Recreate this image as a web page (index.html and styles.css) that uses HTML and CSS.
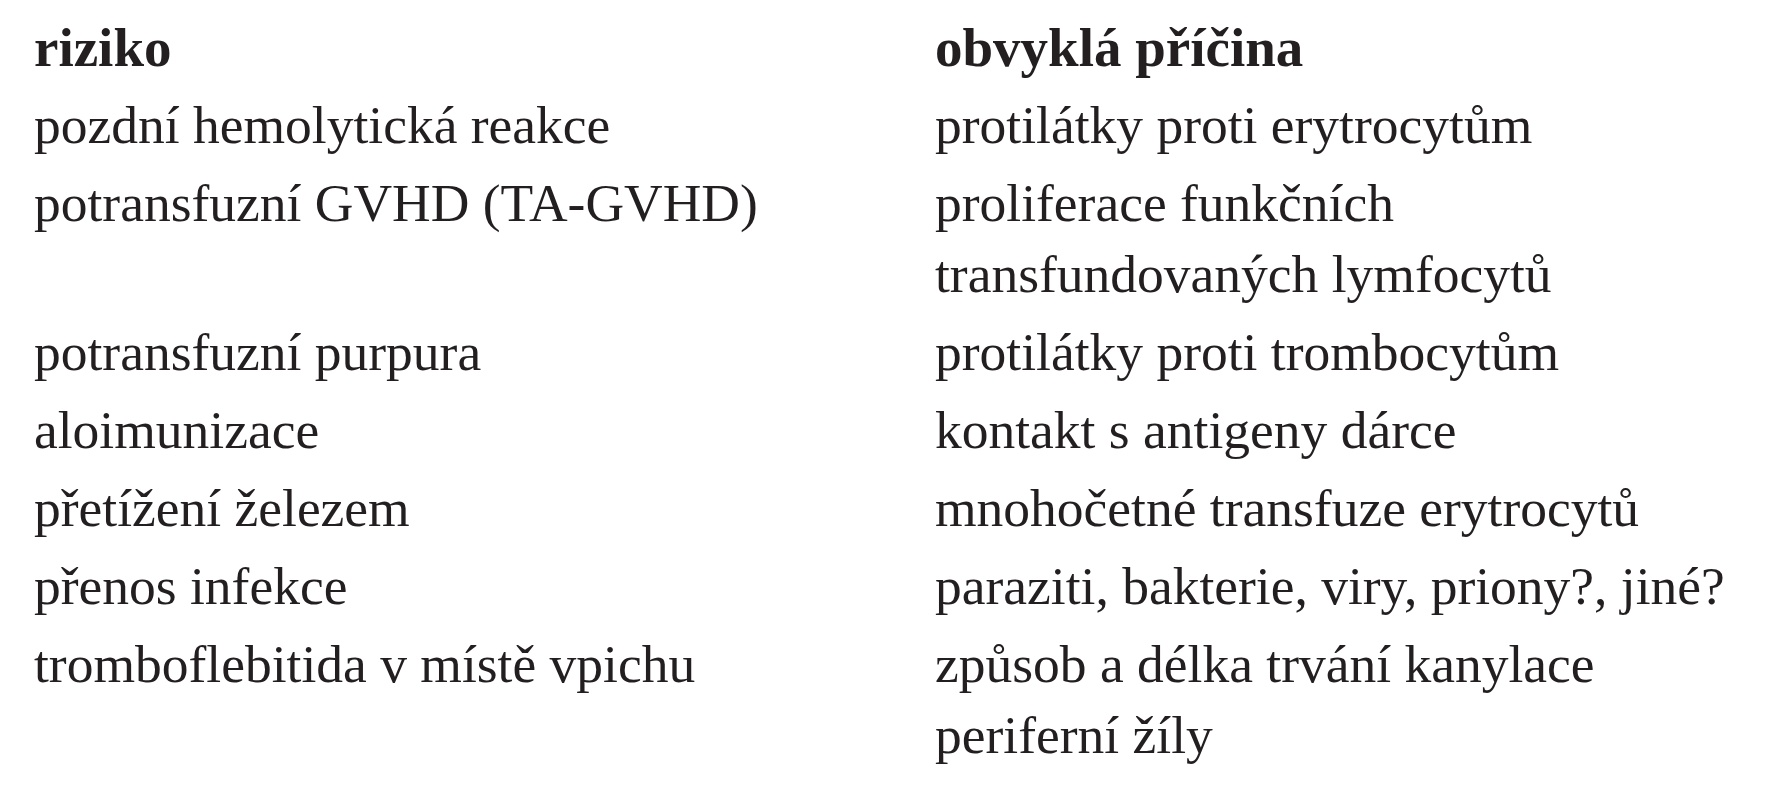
FILE: index.html
```html
<!DOCTYPE html>
<html lang="cs">
<head>
<meta charset="utf-8">
<link rel="stylesheet" href="styles.css">
</head>
<body>
<div class="table">
  <div class="row head"><div class="c1">riziko</div><div class="c2">obvyklá příčina</div></div>
  <div class="row"><div class="c1">pozdní hemolytická reakce</div><div class="c2">protilátky proti erytrocytům</div></div>
  <div class="row"><div class="c1">potransfuzní GVHD (TA-GVHD)</div><div class="c2">proliferace funkčních<br>transfundovaných lymfocytů</div></div>
  <div class="row"><div class="c1">potransfuzní purpura</div><div class="c2">protilátky proti trombocytům</div></div>
  <div class="row"><div class="c1">aloimunizace</div><div class="c2">kontakt s antigeny dárce</div></div>
  <div class="row"><div class="c1">přetížení železem</div><div class="c2">mnohočetné transfuze erytrocytů</div></div>
  <div class="row"><div class="c1">přenos infekce</div><div class="c2">paraziti, bakterie, viry, priony?, jiné?</div></div>
  <div class="row"><div class="c1">tromboflebitida v místě vpichu</div><div class="c2">způsob a délka trvání kanylace<br>periferní žíly</div></div>
</div>
</body>
</html>
```
FILE: styles.css
```css
html, body {
  margin: 0;
  padding: 0;
  background: #ffffff;
}
body {
  font-family: "Liberation Serif", "Times New Roman", serif;
  font-size: 53.5px;
  line-height: 71px;
  color: #231f20;
}
.table {
  display: flex;
  flex-direction: column;
  padding: 8px 0 0 34px;
}
.row {
  display: grid;
  grid-template-columns: 901px 1fr;
  padding: 3.5px 0;
}
.head {
  font-weight: bold;
  font-size: 55px;
}
.c1, .c2 {
  white-space: nowrap;
}
```
